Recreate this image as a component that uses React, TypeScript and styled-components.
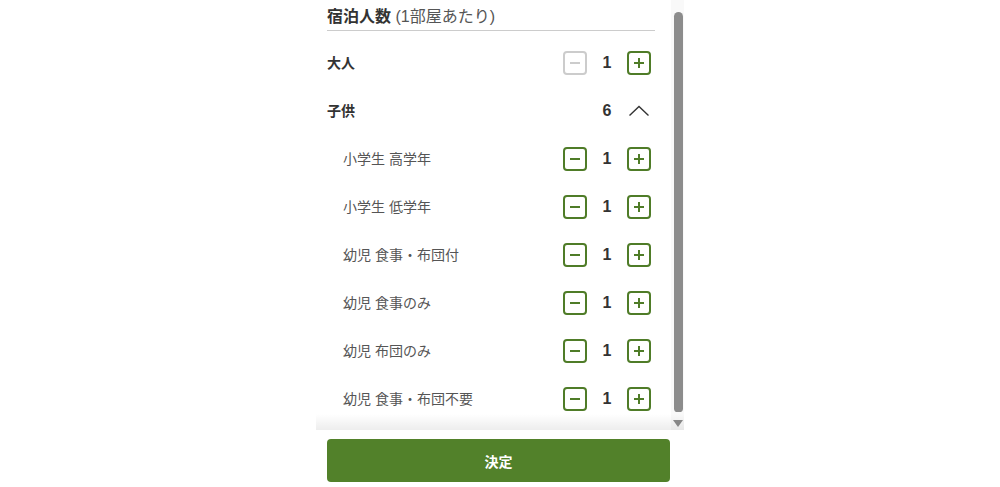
import React from 'react'
import styled, { createGlobalStyle } from 'styled-components'

const GlobalStyle = createGlobalStyle`
    html, body {
        margin: 0;
        padding: 0;
        background: #fff;
    }
    body {
        font-family: 'Liberation Sans', 'Noto Sans CJK JP', sans-serif;
        color: #333;
    }
`

const children = [
    '小学生 高学年',
    '小学生 低学年',
    '幼児 食事・布団付',
    '幼児 食事のみ',
    '幼児 布団のみ',
    '幼児 食事・布団不要',
]

const MinusIcon = () => (
    <svg width="12" height="12" viewBox="0 0 12 12">
        <rect x="1" y="5" width="10" height="2" fill="currentColor" />
    </svg>
)

const PlusIcon = () => (
    <svg width="12" height="12" viewBox="0 0 12 12">
        <rect x="1" y="5" width="10" height="2" fill="currentColor" />
        <rect x="5" y="1" width="2" height="10" fill="currentColor" />
    </svg>
)

const ChevronUp = () => (
    <svg width="24" height="24" viewBox="0 0 24 24">
        <polyline points="2.5,16.5 12,7.5 21.5,16.5" fill="none" stroke="#333" strokeWidth="1.4" />
    </svg>
)

const Stepper = ({ value, min }: { value: number; min?: boolean }) => (
    <Controls>
        <StepButton disabled={min}>
            <MinusIcon />
        </StepButton>
        <Count>{value}</Count>
        <StepButton>
            <PlusIcon />
        </StepButton>
    </Controls>
)

export default function App() {
    return (
        <>
            <GlobalStyle />
            <Page>
                <Panel>
                    <ScrollArea>
                        <Content>
                            <Title>
                                <strong>宿泊人数</strong> <span>(1部屋あたり)</span>
                            </Title>
                            <Row>
                                <Label>大人</Label>
                                <Stepper value={1} min />
                            </Row>
                            <Row>
                                <Label>子供</Label>
                                <Controls>
                                    <Spacer />
                                    <Count>6</Count>
                                    <Toggle>
                                        <ChevronUp />
                                    </Toggle>
                                </Controls>
                            </Row>
                            {children.map((name) => (
                                <Row key={name}>
                                    <Label $sub>{name}</Label>
                                    <Stepper value={1} />
                                </Row>
                            ))}
                        </Content>
                        <Scrollbar>
                            <Thumb />
                            <Arrow />
                        </Scrollbar>
                        <Fade />
                    </ScrollArea>
                    <Footer>
                        <Submit>決定</Submit>
                    </Footer>
                </Panel>
            </Page>
        </>
    )
}

const Page = styled.div`
    display: flex;
    justify-content: center;
    width: 100%;
    height: 487px;
`

const Panel = styled.div`
    width: 368px;
    height: 487px;
    display: flex;
    flex-direction: column;
    background: #fff;
`

const ScrollArea = styled.div`
    position: relative;
    height: 430px;
    display: flex;
    overflow: hidden;
`

const Content = styled.div`
    flex: 1;
    padding: 5px 16px 0 11px;
    overflow: hidden;
`

const Title = styled.div`
    font-size: 16px;
    line-height: 24px;
    padding-bottom: 1px;
    border-bottom: 1px solid #cccccc;
    margin-bottom: 8px;
    white-space: nowrap;

    strong {
        font-weight: bold;
        color: #333;
    }
    span {
        color: #555;
    }
`

const Row = styled.div`
    display: flex;
    align-items: center;
    justify-content: space-between;
    height: 48px;
`

const Label = styled.div<{ $sub?: boolean }>`
    font-size: 14px;
    padding-bottom: 2px;
    font-weight: ${(p) => (p.$sub ? 'normal' : 'bold')};
    color: ${(p) => (p.$sub ? '#555' : '#333')};
    padding-left: ${(p) => (p.$sub ? '16px' : '0')};
`

const Controls = styled.div`
    display: flex;
    align-items: center;
    padding-right: 4px;
`

const StepButton = styled.button`
    width: 24px;
    height: 24px;
    padding: 0;
    box-sizing: border-box;
    border: 2px solid ${(p) => (p.disabled ? '#cccccc' : '#4f7c28')};
    border-radius: 4px;
    background: #fff;
    color: ${(p) => (p.disabled ? '#cccccc' : '#4f7c28')};
    display: flex;
    align-items: center;
    justify-content: center;
    cursor: pointer;
`

const Spacer = styled.div`
    width: 24px;
`

const Count = styled.span`
    width: 40px;
    text-align: center;
    font-size: 16px;
    font-weight: bold;
    color: #333;
`

const Toggle = styled.div`
    width: 24px;
    height: 24px;
    display: flex;
    align-items: center;
    justify-content: center;
`

const Scrollbar = styled.div`
    width: 13px;
    background: #f9f9f9;
    display: flex;
    flex-direction: column;
    align-items: center;
    padding: 12px 0 3px 1px;
    box-sizing: border-box;
`

const Thumb = styled.div`
    width: 9px;
    height: 400px;
    background: #8c8c8c;
    border-radius: 5px 5px 4px 4px;
`

const Arrow = styled.div`
    margin-top: 8px;
    width: 0;
    height: 0;
    border-left: 5px solid transparent;
    border-right: 5px solid transparent;
    border-top: 7px solid #8c8c8c;
`

const Fade = styled.div`
    position: absolute;
    left: 0;
    right: 0;
    bottom: 0;
    height: 16px;
    background: linear-gradient(to bottom, rgba(0, 0, 0, 0), rgba(0, 0, 0, 0.07));
    pointer-events: none;
`

const Footer = styled.div`
    flex: 1;
    padding: 9px 14px 0 11px;
`

const Submit = styled.button`
    width: 100%;
    height: 43px;
    border: none;
    border-radius: 4px;
    background: #52812a;
    color: #fff;
    font-family: 'Liberation Sans', 'Noto Sans CJK JP', sans-serif;
    font-size: 14px;
    font-weight: bold;
    cursor: pointer;
`
